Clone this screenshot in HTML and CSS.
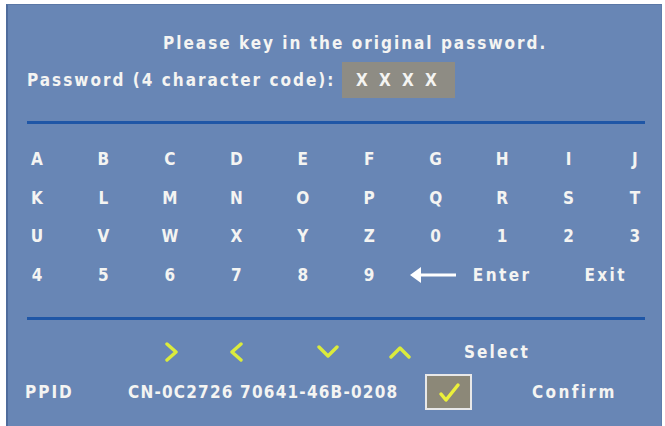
FILE: index.html
```html
<!DOCTYPE html>
<html lang="en">
<head>
<meta charset="utf-8">
<title>Password</title>
<link rel="stylesheet" href="styles.css">
</head>
<body>
<div class="osd">
  <div class="title">Please key in the original password.</div>

  <div class="pw-row">
    <span class="pw-label">Password (4 character code):</span>
    <span class="pw-box"><span>X</span><span>X</span><span>X</span><span>X</span></span>
  </div>

  <div class="rule"></div>

  <div class="keys">
    <span>A</span><span>B</span><span>C</span><span>D</span><span>E</span>
    <span>F</span><span>G</span><span>H</span><span>I</span><span>J</span>
    <span>K</span><span>L</span><span>M</span><span>N</span><span>O</span>
    <span>P</span><span>Q</span><span>R</span><span>S</span><span>T</span>
    <span>U</span><span>V</span><span>W</span><span>X</span><span>Y</span>
    <span>Z</span><span>0</span><span>1</span><span>2</span><span>3</span>
    <span>4</span><span>5</span><span>6</span><span>7</span><span>8</span>
    <span>9</span>
    <span class="back">
      <svg width="46" height="18" viewBox="0 0 46 18">
        <polygon points="0,9 11,1 11,17" fill="#ffffff"/>
        <rect x="10" y="7.5" width="36" height="3" fill="#ffffff"/>
      </svg>
    </span>
    <span class="enter">Enter</span>
    <span class="exit">Exit</span>
  </div>

  <div class="rule rule-low"></div>

  <div class="nav-row">
    <svg class="chev chev-right" width="14" height="20" viewBox="0 0 14 20">
      <polyline points="2,2 11,10 2,18"/>
    </svg>
    <svg class="chev chev-left" width="14" height="20" viewBox="0 0 14 20">
      <polyline points="12,2 3,10 12,18"/>
    </svg>
    <svg class="chev chev-down" width="22" height="14" viewBox="0 0 22 14">
      <polyline points="2,2 11,11 20,2"/>
    </svg>
    <svg class="chev chev-up" width="22" height="14" viewBox="0 0 22 14">
      <polyline points="2,12 11,3 20,12"/>
    </svg>
    <span class="select">Select</span>
  </div>

  <div class="info-row">
    <span class="ppid">PPID</span>
    <span class="code">CN-0C2726 70641-46B-0208</span>
    <span class="check">
      <svg width="26" height="22" viewBox="0 0 26 22">
        <polyline points="5,13 10,19 22,4"/>
      </svg>
    </span>
    <span class="confirm">Confirm</span>
  </div>
</div>
</body>
</html>
```

FILE: styles.css
```css
html, body {
  margin: 0;
  padding: 0;
  background: #ffffff;
}

body {
  font-family: "Liberation Sans Narrow", "DejaVu Sans Condensed", "Liberation Sans", sans-serif;
  font-stretch: condensed;
  font-weight: bold;
  color: #f4f4f2;
}

.osd {
  margin: 4px 0 0 6px;
  width: 653px;
  height: 421px;
  background: #6886b5;
  border-top: 1px solid #5a77a6;
  border-left: 2px solid #4f6c9c;
  border-right: 1px solid #5f7dab;
  display: flex;
  flex-direction: column;
  font-size: 17px;
  letter-spacing: 2.4px;
  overflow: hidden;
}

.title {
  margin-top: 28px;
  height: 20px;
  line-height: 20px;
  padding-left: 155px;
  white-space: nowrap;
  letter-spacing: 2px;
}

.pw-row {
  margin-top: 9px;
  height: 36px;
  display: flex;
  align-items: center;
  padding-left: 19px;
}

.pw-label {
  width: 315px;
  white-space: nowrap;
  letter-spacing: 2px;
}

.pw-box {
  width: 113px;
  height: 36px;
  background: #8e8c84;
  display: flex;
  align-items: center;
  gap: 11px;
  padding-left: 14px;
  box-sizing: border-box;
  letter-spacing: 0;
}

.pw-box span {
  width: 12px;
  text-align: center;
}

.rule {
  margin: 23px 0 0 19px;
  width: 618px;
  height: 3px;
  background: #1f56a6;
}

.rule-low {
  margin-top: 23px;
}

.keys {
  margin: 16px 0 0 22px;
  width: 612px;
  display: grid;
  grid-template-columns: repeat(10, 14px);
  grid-auto-rows: 38.5px;
  justify-content: space-between;
  justify-items: center;
  align-items: center;
  letter-spacing: 0;
}

.keys span {
  white-space: nowrap;
  display: flex;
  justify-content: center;
}

.keys .back {
  width: 46px;
  margin-left: -6px;
}

.keys .enter,
.keys .exit {
  letter-spacing: 2.4px;
}

.keys .exit {
  grid-column: 9 / span 2;
  margin-left: 8px;
}

.nav-row {
  margin-top: 20px;
  height: 24px;
  display: flex;
  align-items: center;
}

.chev polyline {
  fill: none;
  stroke: #dbeb3c;
  stroke-width: 3.4;
  stroke-linecap: round;
  stroke-linejoin: round;
}

.chev-right { margin-left: 157px; }
.chev-left { margin-left: 50px; }
.chev-down { margin-left: 74px; }
.chev-up { margin-left: 50px; }

.select {
  margin-left: 53px;
  letter-spacing: 2.1px;
}

.info-row {
  margin-top: 9px;
  height: 38px;
  display: flex;
  align-items: center;
}

.ppid {
  margin-left: 17px;
  width: 103px;
  letter-spacing: 2px;
}

.code {
  width: 297px;
  white-space: nowrap;
  letter-spacing: 1.2px;
}

.check {
  width: 47px;
  height: 36px;
  box-sizing: border-box;
  border: 2px solid #e8e8e8;
  background: #8c8878;
  display: flex;
  align-items: center;
  justify-content: center;
}

.check polyline {
  fill: none;
  stroke: #ecf03a;
  stroke-width: 3.5;
  stroke-linecap: round;
  stroke-linejoin: round;
}

.confirm {
  margin-left: 60px;
}
```
